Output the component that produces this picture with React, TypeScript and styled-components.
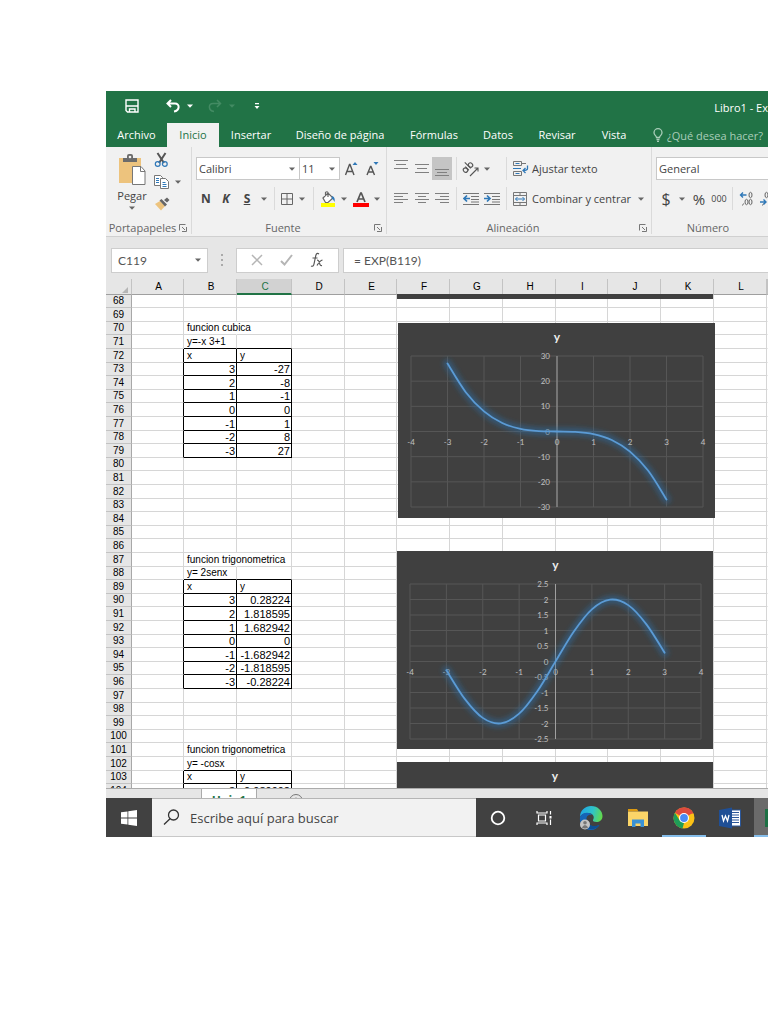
import React from "react";
import styled, { createGlobalStyle, css } from "styled-components";

const UI = `"Open Sans", "Noto Sans", sans-serif`;
const SHEET = `"Liberation Sans", Arial, sans-serif`;
const CALIBRI = `Lato, "Open Sans", sans-serif`;
const GREEN = "#217346";
const GREY = "#666";
const BLUE = "#2f78b8";

const Global = createGlobalStyle`
  *, *::before, *::after { box-sizing: border-box; }
  body { margin: 0; background: #fff; font-family: ${UI}; }
  button, input, select { font: inherit; color: inherit; border: 0; padding: 0; margin: 0; background: none; border-radius: 0; outline: 0; }
  svg { display: block; flex: none; }
`;

const Window = styled.main`
  margin: 91px 0 0 106px;
  overflow: hidden;
  color: #444;
  font-size: 11px;
`;

/* ---------- title bar and tabs ---------- */

const TitleBar = styled.header`
  display: flex;
  align-items: center;
  height: 32px;
  background: ${GREEN};
  color: #fff;
`;

const QuickAccess = styled.div`
  display: flex;
  align-items: center;
  gap: 14px;
  padding: 0 0 2px 7px;
`;

const QuickButton = styled.button<{ $w?: number }>`
  display: flex;
  align-items: center;
  justify-content: center;
  gap: 6px;
  width: ${(p) => p.$w || 28}px;
  height: 23px;
`;

const Title = styled.h1`
  margin: 0 0 0 auto;
  font-size: 11px;
  font-weight: 400;
  white-space: nowrap;
`;

const Tabs = styled.nav`
  display: flex;
  height: 24px;
  background: ${GREEN};
  color: #fff;
`;

const Tab = styled.button<{ $w: number; $active?: boolean }>`
  flex: none;
  width: ${(p) => p.$w}px;
  padding-bottom: 1px;
  white-space: nowrap;
  ${(p) => p.$active && css`background: #f1f1f1; color: ${GREEN};`}
`;

const TellMe = styled.button`
  display: flex;
  align-items: center;
  gap: 4px;
  margin-left: 14px;
  color: #a9cdb9;
  white-space: nowrap;
`;

/* ---------- ribbon ---------- */

const Ribbon = styled.section`
  display: flex;
  height: 90px;
  background: #f1f1f1;
  border-bottom: 1px solid #d0d0d0;
`;

const Group = styled.div<{ $w?: number }>`
  ${(p) => (p.$w ? css`flex: none; width: ${p.$w}px; border-right: 1px solid #dadada;` : css`flex: 1; min-width: 0;`)}
  display: flex;
  flex-direction: column;
  padding: 10px 0 0 4px;
  margin-bottom: 2px;
`;

const Row = styled.div`
  display: flex;
  align-items: center;
  height: 23px;
  margin-bottom: 7px;
`;

const GroupLabel = styled.div`
  display: flex;
  align-items: center;
  margin: auto 0 0 -4px;
  height: 13px;
  padding-right: 4px;
  color: ${GREY};
  span { flex: 1; text-align: center; }
`;

const Tool = styled.button<{ $w: number; $on?: boolean }>`
  flex: none;
  display: flex;
  align-items: center;
  justify-content: center;
  width: ${(p) => p.$w}px;
  height: 23px;
  ${(p) => p.$on && css`background: #c5c5c5;`}
`;

const Glyph = styled.span<{ $italic?: boolean; $line?: boolean; $size?: number }>`
  font-size: ${(p) => p.$size || 12}px;
  font-weight: ${(p) => (p.$size ? 400 : 700)};
  font-style: ${(p) => (p.$italic ? "italic" : "normal")};
  text-decoration: ${(p) => (p.$line ? "underline" : "none")};
`;

const TextTool = styled.button`
  display: flex;
  align-items: center;
  gap: 3px;
  height: 23px;
  padding-left: 2px;
  white-space: nowrap;
`;

const Sep = styled.i`
  flex: none;
  width: 1px;
  height: 23px;
  margin: 0 4px;
  background: #dadada;
`;

const Combo = styled.label<{ $w?: number }>`
  display: flex;
  align-items: center;
  ${(p) => (p.$w ? css`flex: none; width: ${p.$w}px;` : css`flex: 1; border-right: 0 !important;`)}
  height: 23px;
  padding: 0 4px 0 2px;
  background: #fff;
  border: 1px solid #c8c8c8;
  & + & { border-left: 0; }
  select { flex: 1; min-width: 0; appearance: none; }
`;

const Clipboard = styled.div`
  display: flex;
  height: 70px;
  margin-top: -8px;
`;

const Paste = styled.button`
  display: flex;
  flex-direction: column;
  align-items: center;
  width: 44px;
  padding-top: 5px;
  line-height: 20px;
`;

const SmallTools = styled.div`
  display: flex;
  flex-direction: column;
  width: 34px;
`;

const SmallTool = styled.button`
  display: flex;
  align-items: center;
  gap: 6px;
  height: 22px;
`;

/* ---------- formula bar ---------- */

const FormulaBar = styled.section`
  display: flex;
  align-items: center;
  height: 42px;
  padding: 4px 0 0 5px;
  background: #e6e6e6;
  color: #555;
  font-family: ${CALIBRI};
  font-size: 12px;
`;

const Box = styled.div<{ $w?: number }>`
  ${(p) => (p.$w ? css`flex: none; width: ${p.$w}px;` : css`flex: 1; min-width: 0; border-right: 0 !important;`)}
  display: flex;
  align-items: center;
  height: 25px;
  padding: 0 6px;
  background: #fff;
  border: 1px solid #cdcdcd;
  input { flex: 1; width: 40px; min-width: 0; }
`;

const FormulaActions = styled(Box)`
  justify-content: space-around;
  margin-right: 4px;
`;

const FormulaBox = styled(Box)`
  padding-left: 10px;
`;

const Dots = styled.div`
  display: flex;
  justify-content: center;
  width: 28px;
`;

/* ---------- sheet ---------- */

const SheetView = styled.section`
  position: relative;
  height: 509px;
  overflow: hidden;
  background: #fff;
`;

const Grid = styled.table`
  width: 100%;
  table-layout: fixed;
  border-collapse: separate;
  border-spacing: 0;
  font-family: ${SHEET};
  font-size: 10px;
  line-height: 12px;
  color: #000;
`;

const ColHead = styled.th<{ $on?: boolean }>`
  height: 16px;
  padding: 1px 0 0 2px;
  font-weight: 400;
  background: #e6e6e6;
  border-right: 1px solid #c3c3c3;
  border-bottom: 1px solid #9f9f9f;
  ${(p) => p.$on && css`background: #d2d2d2; color: ${GREEN}; border-bottom: 2px solid ${GREEN};`}
`;

const Corner = styled(ColHead)`
  padding: 6px 3px 0 0;
  svg { margin-left: auto; }
`;

const SheetRow = styled.tr`
  height: 14px;
  &:nth-child(5n + 1), &:nth-child(5n + 3) { height: 13px; }
`;

const RowHead = styled.th`
  padding: 0;
  font-weight: 400;
  background: #e6e6e6;
  border-right: 1px solid #a8a8a8;
  border-bottom: 1px solid #c3c3c3;
`;

type Edge = "none" | "line" | "box";
const edgeColor = { none: "transparent", line: "#d6d6d6", box: "#000" };

const Cell = styled.td<{ $right: Edge; $bottom: Edge; $num?: boolean }>`
  padding: 0 1px 0 3px;
  white-space: nowrap;
  border-right: 1px solid ${(p) => edgeColor[p.$right]};
  border-bottom: 1px solid ${(p) => edgeColor[p.$bottom]};
  ${(p) => p.$num && css`padding-left: 0; text-align: right; font-size: 11px;`}
`;

const ChartFrame = styled.figure<{ $x: number; $y: number }>`
  position: absolute;
  left: ${(p) => p.$x}px;
  top: ${(p) => p.$y}px;
  margin: 0;
  background: #404040;
`;

/* ---------- sheet tabs and task bar ---------- */

const SheetTabs = styled.nav`
  display: flex;
  height: 10px;
  overflow: hidden;
  padding-left: 95px;
  background: #e6e6e6;
  border-top: 1px solid #ababab;
`;

const SheetTab = styled.button`
  width: 56px;
  height: 22px;
  padding-top: 2px;
  background: #fff;
  border-left: 1px solid #ababab;
  border-right: 1px solid #ababab;
  color: ${GREEN};
  font-size: 12px;
  font-weight: 700;
  line-height: 16px;
`;

const AddSheet = styled.button`
  height: 22px;
  margin-left: 32px;
`;

const TaskBar = styled.footer`
  display: flex;
  height: 39px;
  background: #414141;
`;

const Start = styled.button`
  display: flex;
  align-items: center;
  justify-content: center;
  width: 46px;
`;

const Search = styled.label`
  display: flex;
  align-items: center;
  gap: 10px;
  width: 324px;
  padding-left: 11px;
  background: #f2f2f2;
  border-top: 1px solid #b5b5b5;
  border-bottom: 1px solid #c8c8c8;
  font-size: 13px;
  input { flex: 1; min-width: 0; }
  input::placeholder { color: #444; opacity: 1; }
`;

const TaskButton = styled.button<{ $w: number; $running?: boolean; $active?: boolean }>`
  flex: none;
  display: flex;
  align-items: center;
  justify-content: center;
  width: ${(p) => p.$w}px;
  padding-top: 2px;
  border-bottom: 2px solid ${(p) => (p.$running ? "#85bdea" : "transparent")};
  ${(p) => p.$active && css`flex: 1; justify-content: flex-start; padding-left: 11px; overflow: hidden; background: #6a6a6a;`}
`;

/* ---------- icons ---------- */

const Caret = ({ color = GREY }: { color?: string }) => (
  <svg width="6" height="4" viewBox="0 0 6 4"><path d="M0 .5h6L3 3.7z" fill={color} /></svg>
);

const SaveIcon = () => (
  <svg width="20" height="16" viewBox="0 0 20 16" fill="none" stroke="#fff" strokeWidth="1.4">
    <path d="M4 2h12v12H5.500L4 12.500zM4 8h12M7.500 14v-3h5.500v3" />
  </svg>
);

const UndoIcon = ({ flip }: { flip?: boolean }) => (
  <svg width="16" height="16" viewBox="0 0 16 16" fill="none" stroke={flip ? "#438b63" : "#fff"} strokeWidth={flip ? 1.5 : 2}>
    <g transform={flip ? "matrix(-1 0 0 1 16 0)" : undefined}>
      <path d="M6 2L2.500 5.500 6 9M2.500 5.500H10c5 0 5 7-1 8" />
    </g>
  </svg>
);

const CustomizeIcon = () => (
  <svg width="6" height="8" viewBox="0 0 6 8" fill="#fff"><path d="M1 1h4v1.200H1zM.5 4h5L3 7z" /></svg>
);

const BulbIcon = () => (
  <svg width="10" height="14" viewBox="0 0 10 14" fill="none" stroke="#a9cdb9" strokeWidth="1.300">
    <path d="M3.500 9.500C3.500 8 1 7 1 4.700a4 4 0 018 0C9 7 6.500 8 6.500 9.500zM3.500 11.500h3M4 13.300h2" />
  </svg>
);

const Launcher = () => (
  <svg width="8" height="8" viewBox="0 0 8 8" fill="none" stroke="#777"><path d="M.5 6.500V.5H6.500M3 3l3 3M7.500 3V7.500H3" /></svg>
);

const PasteIcon = () => (
  <svg width="28" height="32" viewBox="0 0 28 32">
    <rect x="1" y="4" width="22" height="25" fill="#edc37d" />
    <path d="M5 4h4V2a2 2 0 012-2h2a2 2 0 012 2v2h4v4H5z" fill="#6b6b6b" />
    <circle cx="12" cy="3" r="1.300" fill="#f1f1f1" />
    <path d="M14.500 12.500h8.500l4 4.500v13.500H14.500z" fill="#fff" stroke="#777" />
    <path d="M22.500 12.500V17.500H27" fill="none" stroke="#777" />
  </svg>
);

const CutIcon = () => (
  <svg width="15" height="16" viewBox="0 0 15 16" fill="none">
    <path d="M3.500 1L10 11M11.500 1L5 11" stroke="#555" strokeWidth="2" />
    <circle cx="3.700" cy="12" r="2.400" stroke={BLUE} strokeWidth="1.200" />
    <circle cx="10.800" cy="12" r="2.400" stroke={BLUE} strokeWidth="1.200" />
  </svg>
);

const CopyIcon = () => (
  <svg width="15" height="14" viewBox="0 0 15 14" fill="#fff" stroke="#777">
    <path d="M.5.5h6l2 2v8h-8z" /><path d="M6.500 3.500h5l3 3v7h-8z" />
    <path d="M2 3.500h3M2 5.500h3M2 7.500h3M8.500 7.500h3M8.500 9.500h4M8.500 11.500h4" stroke={BLUE} />
  </svg>
);

const BrushIcon = () => (
  <svg width="16" height="14" viewBox="0 0 16 14">
    <path d="M1 7l5-3 5 5-4 4.500z" fill="#edc37d" />
    <path d="M5.500 3.500L7.500 2 13 7.500l-2 2zM10 3l3-2.500L15.500 3 13 5.500z" fill="#666" />
  </svg>
);

const GrowIcon = ({ down }: { down?: boolean }) => (
  <svg width="14" height="16" viewBox="0 0 14 16" fill="none">
    <path d={down ? "M2 14L5.500 5.500h.5L9.500 14M3.300 11h5" : "M1.500 14L5.500 3.500h.5L10 14M3 10.500h5.500"} stroke="#555" strokeWidth="1.400" />
    <path d={down ? "M8.500 1h5L11 4z" : "M8.500 4h5L11 1z"} fill={BLUE} />
  </svg>
);

const BordersIcon = () => (
  <svg width="14" height="14" viewBox="0 0 14 14" fill="none" stroke="#666"><path d="M1.500 1.500h11v11h-11zM7 1.500v11M1.500 7h11" /></svg>
);

const FillIcon = () => (
  <svg width="16" height="16" viewBox="0 0 16 16" fill="none">
    <rect x="1" y="12" width="14" height="4" fill="#ff0" />
    <path d="M3 7l5-5 5 5-5 4.500H5.500zM5.500 5V1.500q1.500-1.500 2.500 0V6" stroke="#666" strokeWidth="1.200" fill="#fff" />
    <path d="M12 5q3.500 1 2.500 6-1-3-3-3.500z" fill={BLUE} />
  </svg>
);

const FontColorIcon = () => (
  <svg width="16" height="16" viewBox="0 0 16 16" fill="none">
    <path d="M4 11L7.700 2h.6L12 11M5.300 8h5.400" stroke="#555" strokeWidth="1.700" />
    <rect x="0" y="12" width="16" height="4" fill="red" />
  </svg>
);

/* A stack of strokes; offsets, widths and pitch make each alignment variant. */
const Lines = ({ rows, top = 0, pitch = 3 }: { rows: [number, number][]; top?: number; pitch?: number }) => (
  <svg width="14" height="17" viewBox="0 0 14 17" stroke="#808080">
    {rows.map(([x, w], i) => <path key={i} d={`M${x} ${top + i * pitch + 0.5}h${w}`} />)}
  </svg>
);

const OrientIcon = () => (
  <svg width="18" height="18" viewBox="0 0 18 18" fill="none" stroke="#555" strokeWidth="1.100">
    <g transform="rotate(-45 7 8)">
      <ellipse cx="3" cy="7" rx="2" ry="2.300" /><path d="M5.300 4.500v5M8 1v8.500" /><ellipse cx="10.200" cy="7" rx="2" ry="2.300" />
    </g>
    <path d="M8 16l7.500-7.500M12.500 8h3.500v3.500" />
  </svg>
);

const IndentIcon = ({ out }: { out?: boolean }) => (
  <svg width="16" height="14" viewBox="0 0 16 14" fill="none" stroke="#777">
    <path d="M0 1.500h16M8 4.500h8M8 7.500h8M0 12.500h16M8 10h8" />
    <path d={out ? "M1 6.500h6M4 3.500l-3 3 3 3" : "M0 6.500h6M3 3.500l3 3-3 3"} stroke={BLUE} strokeWidth="1.700" />
  </svg>
);

const WrapIcon = () => (
  <svg width="16" height="16" viewBox="0 0 16 16" fill="none" stroke="#777">
    <path d="M.5.5h8v4h-8zM.5 10.500h8v4h-8zM8.500 2.500H13" />
    <path d="M2.500 2.500h4M2.500 12.500h4M0 7.500h8" stroke={BLUE} />
    <path d="M14.500 4.500v3q0 2-4.500 2M12.500 7L10 9.500l2.500 2.500" stroke={BLUE} strokeWidth="1.300" />
  </svg>
);

const MergeIcon = () => (
  <svg width="16" height="16" viewBox="0 0 16 16" fill="none" stroke="#777">
    <path d="M.5 1.500h13v13H.5zM.5 4.500h13M.5 11.500h13M7 1.500v3M7 11.500v3" />
    <path d="M2.500 8h9M4.500 6l-2 2 2 2M9.500 6l2 2-2 2" stroke={BLUE} />
  </svg>
);

const DecimalIcon = ({ less }: { less?: boolean }) => (
  <svg width="16" height="16" viewBox="0 0 16 16" fill="none" stroke="#666">
    <ellipse cx="11.500" cy="4" rx="1.500" ry="2.700" />
    <ellipse cx={less ? 7.5 : 7.5} cy={less ? 4 : 11} rx="1.500" ry="2.700" />
    <ellipse cx="11.500" cy="11" rx="1.500" ry="2.700" />
    <path d="M4.500 12.500l-1 2" />
    <path d={less ? "M1 11h6M4.500 8.500L7 11l-2.500 2.500" : "M1.500 4h6M4 1.500L1.500 4 4 6.500"} stroke={BLUE} strokeWidth="1.400" />
  </svg>
);

const WindowsIcon = () => (
  <svg width="16" height="16" viewBox="0 0 16 16" fill="#fff">
    <path d="M0 2.300L6.500 1.400V7.500H0zM7.300 1.300L16 0v7.500H7.300zM0 8.400h6.500v6.200L0 13.700zM7.300 8.400H16V16l-8.700-1.300z" />
  </svg>
);

const SearchIcon = () => (
  <svg width="17" height="17" viewBox="0 0 17 17" fill="none" stroke="#333" strokeWidth="1.300">
    <circle cx="10.500" cy="6" r="5" /><path d="M7 9.700L1 15.500" />
  </svg>
);

const TaskViewIcon = () => (
  <svg width="16" height="16" viewBox="0 0 16 16" fill="none" stroke="#fff" strokeWidth="1.200">
    <path d="M1 1v2h10V1M2.500 5h7v6h-7zM1 15v-2h10v2M14.500 1v3.500M14.500 9.500V15" /><path d="M13.500 6h2v2.500h-2z" fill="#fff" stroke="none" />
  </svg>
);

const EdgeIcon = () => (
  <svg width="24" height="24" viewBox="0 0 24 24">
    <defs>
      <linearGradient id="edgeTop" x1="0" y1=".3" x2="1" y2=".5">
        <stop offset="0" stopColor="#1fa5e6" /><stop offset=".55" stopColor="#2fc3c9" /><stop offset="1" stopColor="#62d94d" />
      </linearGradient>
    </defs>
    <path d="M1 11C1 4 6.500 0 12 0c7 0 11.500 5 11.500 10 0 4-3 6-6 6-2.500 0-4-1-3.500-2 2-3 0-7-4.500-7C5 7 2 8.500 1 11z" fill="url(#edgeTop)" />
    <path d="M1 11c2-5 10-5.500 12-2-4-1-6 2-5.500 5 .8 5 6 8 13 5-2 3-5 5-8.500 5C5 24 0 18 1 11z" fill="#1565b8" />
    <path d="M7.500 13c.3 5 5.500 9 13 6-3 5-11 6-14.500 1-2-3-.8-6 1.500-7z" fill="#0c4f96" />
    <circle cx="6" cy="18.500" r="5" fill="#c4c4c4" /><circle cx="6" cy="16.800" r="1.800" fill="#777" /><path d="M2.800 21.500q3.200-5 6.400 0-3.200 2-6.400 0z" fill="#777" />
  </svg>
);

const FolderIcon = () => (
  <svg width="22" height="20" viewBox="0 0 22 20">
    <path d="M1 1h9l1.500 2.500H1z" fill="#dc9a12" /><path d="M1 3.500h20V18H1z" fill="#fbd568" />
    <path d="M5 11.500h12V19h-3.500v-3.500h-5V19H5z" fill="#3a92d6" />
  </svg>
);

const ChromeIcon = () => (
  <svg width="22" height="22" viewBox="0 0 22 22">
    <circle cx="11" cy="11" r="10.500" fill="#fbc116" />
    <path d="M11 11L1.900 5.750A10.500 10.500 0 0120.100 5.750z" fill="#dd4b3e" />
    <path d="M11 .5a10.500 10.500 0 019.500 6H11z" fill="#dd4b3e" />
    <path d="M1.900 5.750L6.700 13.500 11 16 9.500 21.400A10.500 10.500 0 011.900 5.750z" fill="#1e9d58" />
    <circle cx="11" cy="11" r="5" fill="#fff" /><circle cx="11" cy="11" r="3.900" fill="#4a8af4" />
  </svg>
);

const WordIcon = () => (
  <svg width="22" height="22" viewBox="0 0 22 22">
    <rect x="12" y="3" width="9.500" height="16" fill="#fff" stroke="#2b579a" />
    <path d="M13 5.500h7M13 8h7M13 10.500h7M13 13h7M13 15.500h7" stroke="#2b579a" />
    <path d="M0 3L13 .5v21L0 19z" fill="#1f4f96" />
    <path d="M3 8l1.500 6L6.500 9l2 5L10 8" fill="none" stroke="#fff" strokeWidth="1.300" />
  </svg>
);

/* ---------- charts ---------- */

type Pt = [number, number];

const smooth = (p: Pt[]) => {
  let d = `M${p[0][0]} ${p[0][1]}`;
  for (let i = 0; i < p.length - 1; i++) {
    const a = p[i - 1] || p[i];
    const b = p[i];
    const c = p[i + 1];
    const e = p[i + 2] || c;
    d += `C${b[0] + (c[0] - a[0]) / 6} ${b[1] + (c[1] - a[1]) / 6} ${c[0] - (e[0] - b[0]) / 6} ${c[1] - (e[1] - b[1]) / 6} ${c[0]} ${c[1]}`;
  }
  return d;
};

interface ChartProps {
  id: string; x: number; y: number; w: number; h: number;
  bottom: number; max: number; step: number; fn: (v: number) => number;
}

const PLOT_LEFT = 13;
const PLOT_TOP = 33;
const samples = Array.from({ length: 13 }, (_, i) => -3 + i / 2);

const Chart = ({ id, x, y, w, h, bottom, max, step, fn }: ChartProps) => {
  const right = w - 12;
  const sx = (v: number) => PLOT_LEFT + ((v + 4) * (right - PLOT_LEFT)) / 8;
  const sy = (v: number) => PLOT_TOP + ((max - v) * (bottom - PLOT_TOP)) / (2 * max);
  const xs = [-4, -3, -2, -1, 0, 1, 2, 3, 4];
  const ys: number[] = [];
  for (let v = max; v >= -max; v -= step) ys.push(v);
  const path = smooth(samples.map((v) => [sx(v), sy(fn(v))] as Pt));
  return (
    <ChartFrame $x={x} $y={y}>
      <svg width={w} height={h} viewBox={`0 0 ${w} ${h}`} role="img" aria-label="y">
        <defs>
          <filter id={id} x="-20%" y="-20%" width="140%" height="140%"><feGaussianBlur stdDeviation="2.500" /></filter>
        </defs>
        <g stroke="#565656" strokeWidth="1">
          {xs.map((v) => <path key={v} d={`M${sx(v)} ${PLOT_TOP}V${bottom}`} />)}
          {ys.map((v) => <path key={v} d={`M${PLOT_LEFT} ${sy(v)}H${right}`} />)}
        </g>
        <path d={`M${sx(0)} ${PLOT_TOP}V${bottom}`} stroke="#a0a0a0" />
        <g fill="#c0c0c0" fontFamily={CALIBRI} fontSize="8">
          {xs.map((v) => <text key={v} x={sx(v)} y={sy(0) + 13} textAnchor="middle">{v}</text>)}
          {ys.map((v) => <text key={v} x={sx(0) - 7} y={sy(v) + 3} textAnchor="end">{v}</text>)}
        </g>
        <path d={path} fill="none" stroke="#2a6ea8" strokeWidth="8" strokeOpacity=".5" strokeLinecap="round" filter={`url(#${id})`} />
        <path d={path} fill="none" stroke="#5b9bd5" strokeWidth="1.800" strokeLinecap="round" />
        <text x={sx(0)} y="18" textAnchor="middle" fill="#eee" fontFamily={CALIBRI} fontSize="12" fontWeight="700">y</text>
      </svg>
    </ChartFrame>
  );
};

const cubic = (v: number) => -(v ** 3);
const sine = (v: number) => 2 * Math.sin(v);

/* ---------- sheet data ---------- */

const columns: [string, number][] = [
  ["A", 52], ["B", 53], ["C", 55], ["D", 53], ["E", 52], ["F", 53],
  ["G", 53], ["H", 53], ["I", 52], ["J", 53], ["K", 53], ["L", 53],
];

const rows = Array.from({ length: 37 }, (_, i) => 68 + i);

const titles: Record<number, string> = {
  70: "funcion cubica", 71: "y=-x 3+1",
  87: "funcion trigonometrica", 88: "y= 2senx",
  101: "funcion trigonometrica", 102: "y= -cosx",
};

const values: Record<number, [string, string]> = {
  72: ["x", "y"], 73: ["3", "-27"], 74: ["2", "-8"], 75: ["1", "-1"], 76: ["0", "0"],
  77: ["-1", "1"], 78: ["-2", "8"], 79: ["-3", "27"],
  89: ["x", "y"], 90: ["3", "0.28224"], 91: ["2", "1.818595"], 92: ["1", "1.682942"], 93: ["0", "0"],
  94: ["-1", "-1.682942"], 95: ["-2", "-1.818595"], 96: ["-3", "-0.28224"],
  103: ["x", "y"], 104: ["3", "0.989992"],
};

const cellProps = (row: number, col: string) => {
  const inTable = row in values;
  const isBC = col === "B" || col === "C";
  const spills = (titles[row] || "").startsWith("funcion") && col === "B";
  const right: Edge = spills ? "none" : inTable && (isBC || col === "A") ? "box" : "line";
  const bottom: Edge = isBC && (inTable || row + 1 in values) ? "box" : "line";
  const text = isBC && inTable ? values[row][col === "B" ? 0 : 1] : col === "B" ? titles[row] || "" : "";
  return { $right: right, $bottom: bottom, $num: inTable && values[row][0] !== "x", children: text };
};

export default function App() {
  return (
    <>
      <Global />
      <Window>
        <TitleBar>
          <QuickAccess>
            <QuickButton $w={38} aria-label="Guardar"><SaveIcon /></QuickButton>
            <QuickButton aria-label="Deshacer"><UndoIcon /><Caret color="#fff" /></QuickButton>
            <QuickButton aria-label="Rehacer"><UndoIcon flip /><Caret color="#438b63" /></QuickButton>
            <QuickButton $w={16} aria-label="Personalizar"><CustomizeIcon /></QuickButton>
          </QuickAccess>
          <Title>Libro1 - Ex</Title>
        </TitleBar>
        <Tabs>
          <Tab $w={61}>Archivo</Tab>
          <Tab $w={52} $active>Inicio</Tab>
          <Tab $w={64}>Insertar</Tab>
          <Tab $w={114}>Diseño de página</Tab>
          <Tab $w={74}>Fórmulas</Tab>
          <Tab $w={54}>Datos</Tab>
          <Tab $w={64}>Revisar</Tab>
          <Tab $w={50}>Vista</Tab>
          <TellMe><BulbIcon />¿Qué desea hacer?</TellMe>
        </Tabs>

        <Ribbon>
          <Group $w={86}>
            <Clipboard>
              <Paste><PasteIcon />Pegar<Caret /></Paste>
              <SmallTools>
                <SmallTool aria-label="Cortar"><CutIcon /></SmallTool>
                <SmallTool aria-label="Copiar"><CopyIcon /><Caret /></SmallTool>
                <SmallTool aria-label="Copiar formato"><BrushIcon /></SmallTool>
              </SmallTools>
            </Clipboard>
            <GroupLabel><span>Portapapeles</span><Launcher /></GroupLabel>
          </Group>

          <Group $w={195}>
            <Row>
              <Combo $w={104}><select aria-label="Fuente"><option>Calibri</option></select><Caret /></Combo>
              <Combo $w={40}><select aria-label="Tamaño"><option>11</option></select><Caret /></Combo>
              <Tool $w={22} aria-label="Aumentar"><GrowIcon /></Tool>
              <Tool $w={20} aria-label="Disminuir"><GrowIcon down /></Tool>
            </Row>
            <Row>
              <Tool $w={20}><Glyph>N</Glyph></Tool>
              <Tool $w={20}><Glyph $italic>K</Glyph></Tool>
              <Tool $w={22}><Glyph $line>S</Glyph></Tool>
              <Tool $w={12} aria-label="Subrayado"><Caret /></Tool>
              <Sep />
              <Tool $w={16} aria-label="Bordes"><BordersIcon /></Tool>
              <Tool $w={14} aria-label="Más bordes"><Caret /></Tool>
              <Sep />
              <Tool $w={20} aria-label="Relleno"><FillIcon /></Tool>
              <Tool $w={12} aria-label="Más rellenos"><Caret /></Tool>
              <Tool $w={22} aria-label="Color"><FontColorIcon /></Tool>
              <Tool $w={10} aria-label="Más colores"><Caret /></Tool>
            </Row>
            <GroupLabel><span>Fuente</span><Launcher /></GroupLabel>
          </Group>

          <Group $w={265}>
            <Row>
              <Tool $w={20} aria-label="Arriba"><Lines pitch={4} rows={[[0, 14], [2, 10], [0, 14]]} /></Tool>
              <Tool $w={21} aria-label="Medio"><Lines top={4} pitch={4} rows={[[0, 14], [2, 10], [0, 14]]} /></Tool>
              <Tool $w={20} $on aria-label="Abajo"><Lines top={9} rows={[[0, 14], [2, 10], [0, 14]]} /></Tool>
              <Sep />
              <Tool $w={20} aria-label="Orientación"><OrientIcon /></Tool>
              <Tool $w={12} aria-label="Más orientación"><Caret /></Tool>
              <Tool $w={9} as="span" />
              <Sep />
              <TextTool><WrapIcon />Ajustar texto</TextTool>
            </Row>
            <Row>
              <Tool $w={20} aria-label="Izquierda"><Lines top={3} rows={[[0, 14], [0, 9], [0, 14], [0, 9]]} /></Tool>
              <Tool $w={21} aria-label="Centro"><Lines top={3} rows={[[0, 14], [3, 8], [0, 14], [3, 8]]} /></Tool>
              <Tool $w={20} aria-label="Derecha"><Lines top={3} rows={[[0, 14], [5, 9], [0, 14], [5, 9]]} /></Tool>
              <Sep />
              <Tool $w={20} aria-label="Disminuir sangría"><IndentIcon out /></Tool>
              <Tool $w={21} aria-label="Aumentar sangría"><IndentIcon /></Tool>
              <Sep />
              <TextTool><MergeIcon />Combinar y centrar</TextTool>
              <Tool $w={20} aria-label="Más"><Caret /></Tool>
            </Row>
            <GroupLabel><span>Alineación</span><Launcher /></GroupLabel>
          </Group>

          <Group>
            <Row>
              <Combo><select aria-label="Formato de número"><option>General</option></select></Combo>
            </Row>
            <Row>
              <Tool $w={20}><Glyph $size={16}>$</Glyph></Tool>
              <Tool $w={12} aria-label="Más monedas"><Caret /></Tool>
              <Tool $w={22}><Glyph $size={15}>%</Glyph></Tool>
              <Tool $w={18}><Glyph $size={9}>000</Glyph></Tool>
              <Sep />
              <Tool $w={20} aria-label="Aumentar decimales"><DecimalIcon /></Tool>
              <Tool $w={20} aria-label="Disminuir decimales"><DecimalIcon less /></Tool>
            </Row>
            <GroupLabel><span>Número</span></GroupLabel>
          </Group>
        </Ribbon>

        <FormulaBar>
          <Box $w={97}><input aria-label="Cuadro de nombres" defaultValue="C119" /><Caret /></Box>
          <Dots>
            <svg width="2" height="12" viewBox="0 0 2 12" fill="#aaa"><path d="M0 0h2v2H0zM0 5h2v2H0zM0 10h2v2H0z" /></svg>
          </Dots>
          <FormulaActions $w={103}>
            <svg width="12" height="12" viewBox="0 0 12 12" stroke="#b5b5b5" strokeWidth="1.500"><path d="M1 1l10 10M11 1L1 11" /></svg>
            <svg width="13" height="12" viewBox="0 0 13 12" fill="none" stroke="#b5b5b5" strokeWidth="2"><path d="M1 7l3.500 3.500L12 1" /></svg>
            <svg width="14" height="16" viewBox="0 0 14 16" fill="none" stroke="#555" strokeWidth="1.200">
              <path d="M9 2Q6.500 0 5.700 4L4 12q-.6 3-3 2M2.500 6h5M7 8q2 0 2.500 3t2.500 2.500M12.500 8Q10 8.500 7 13.500" />
            </svg>
          </FormulaActions>
          <FormulaBox><input aria-label="Fórmula" defaultValue="= EXP(B119)" /></FormulaBox>
        </FormulaBar>

        <SheetView>
          <Grid>
            <colgroup>
              <col width={26} />
              {columns.map(([name, w]) => <col key={name} width={w} />)}
              <col />
            </colgroup>
            <thead>
              <tr>
                <Corner><svg width="6" height="6" viewBox="0 0 6 6"><path d="M6 0v6H0z" fill="#b5b5b5" /></svg></Corner>
                {columns.map(([name]) => <ColHead key={name} scope="col" $on={name === "C"}>{name}</ColHead>)}
                <ColHead />
              </tr>
            </thead>
            <tbody>
              {rows.map((r) => (
                <SheetRow key={r}>
                  <RowHead scope="row">{r}</RowHead>
                  {columns.map(([name]) => <Cell key={name} {...cellProps(r, name)} />)}
                  <Cell $right="none" $bottom="line" />
                </SheetRow>
              ))}
            </tbody>
          </Grid>
          <ChartFrame $x={291} $y={15}><svg width="316" height="5" /></ChartFrame>
          <Chart id="glowCubic" x={292} y={44} w={317} h={195} bottom={184} max={30} step={10} fn={cubic} />
          <Chart id="glowSine" x={291} y={272} w={316} h={198} bottom={188} max={2.5} step={0.5} fn={sine} />
          <ChartFrame $x={291} $y={483}>
            <svg width="316" height="40" viewBox="0 0 316 40">
              <text x="158" y="18" textAnchor="middle" fill="#eee" fontFamily={CALIBRI} fontSize="12" fontWeight="700">y</text>
            </svg>
          </ChartFrame>
        </SheetView>

        <SheetTabs>
          <SheetTab>Hoja1</SheetTab>
          <AddSheet aria-label="Hoja nueva">
            <svg width="14" height="20" viewBox="0 0 14 20" fill="none" stroke="#777"><circle cx="7" cy="11" r="6.500" /><path d="M7 7.500v7M3.500 11h7" /></svg>
          </AddSheet>
        </SheetTabs>

        <TaskBar>
          <Start aria-label="Inicio"><WindowsIcon /></Start>
          <Search><SearchIcon /><input aria-label="Buscar" placeholder="Escribe aquí para buscar" /></Search>
          <TaskButton $w={44} aria-label="Cortana">
            <svg width="16" height="16" viewBox="0 0 16 16"><circle cx="8" cy="8" r="6.300" fill="none" stroke="#fff" strokeWidth="1.800" /></svg>
          </TaskButton>
          <TaskButton $w={48} aria-label="Vista de tareas"><TaskViewIcon /></TaskButton>
          <TaskButton $w={46} aria-label="Edge"><EdgeIcon /></TaskButton>
          <TaskButton $w={48} aria-label="Explorador"><FolderIcon /></TaskButton>
          <TaskButton $w={44} $running aria-label="Chrome"><ChromeIcon /></TaskButton>
          <TaskButton $w={48} aria-label="Word"><WordIcon /></TaskButton>
          <TaskButton $w={0} $running $active aria-label="Excel">
            <svg width="22" height="20" viewBox="0 0 22 20"><rect width="22" height="18" y="1" fill="#1d7044" /></svg>
          </TaskButton>
        </TaskBar>
      </Window>
    </>
  );
}
